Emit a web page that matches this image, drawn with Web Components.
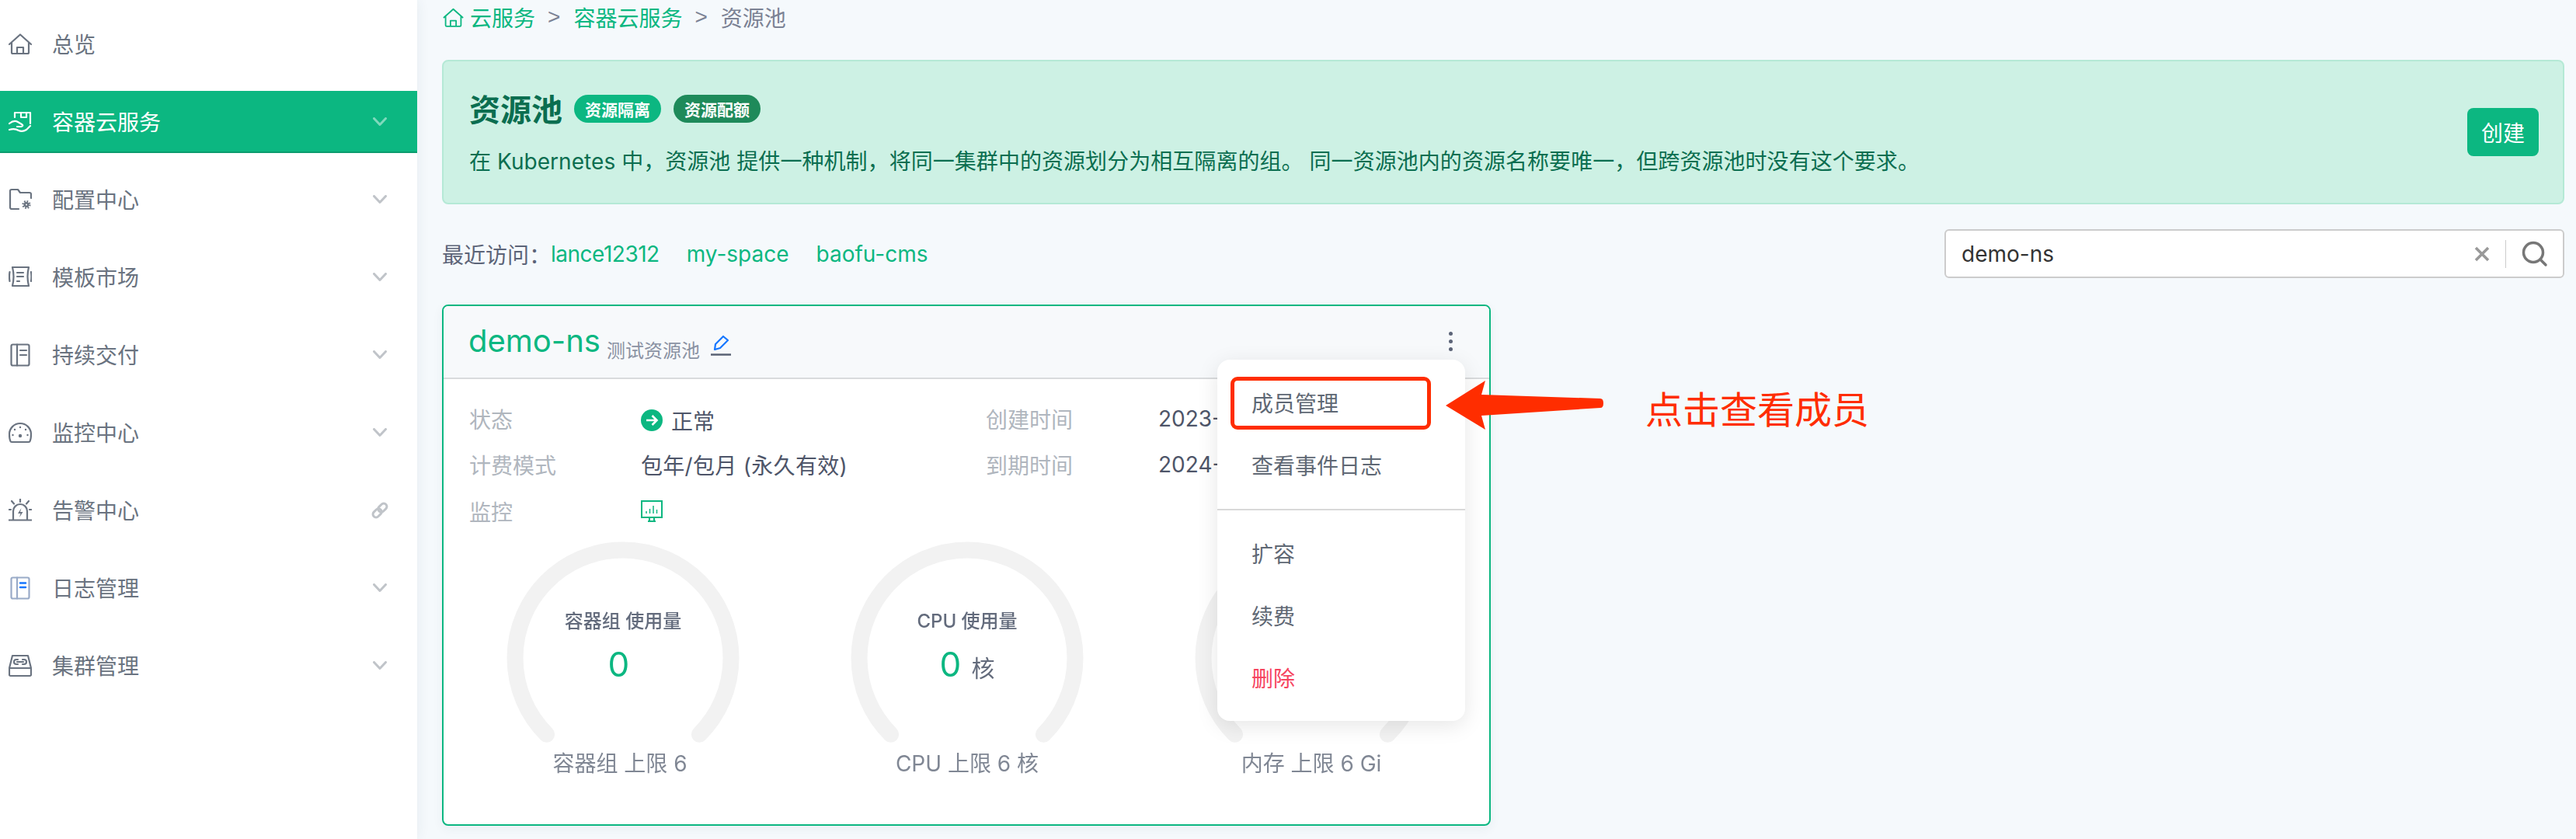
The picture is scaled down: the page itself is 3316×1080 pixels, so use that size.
<!DOCTYPE html>
<html lang="zh-CN">
<head>
<meta charset="utf-8">
<title>资源池</title>
<style>
  html, body { margin: 0; height: 100%; }
  body {
    position: relative;
    overflow: hidden;
    background: #f5f9fc;
    font-family: Inter, "Noto Sans CJK SC", sans-serif;
    font-size: 28px;
  }
  #app { display: flex; height: 1080px; }
</style>
</head>
<body>
<div id="app">
  <side-nav>
    <nav-item icon="home" label="总览" arrow="none"></nav-item>
    <nav-item icon="hand" label="容器云服务" active></nav-item>
    <nav-item icon="folder" label="配置中心"></nav-item>
    <nav-item icon="scroll" label="模板市场"></nav-item>
    <nav-item icon="book" label="持续交付"></nav-item>
    <nav-item icon="dial" label="监控中心"></nav-item>
    <nav-item icon="alarm" label="告警中心" arrow="link"></nav-item>
    <nav-item icon="log" label="日志管理"></nav-item>
    <nav-item icon="drive" label="集群管理"></nav-item>
  </side-nav>
  <pool-page>
    <bread-crumb></bread-crumb>
    <info-banner></info-banner>
    <recent-bar></recent-bar>
    <pool-card></pool-card>
  </pool-page>
</div>
<member-callout></member-callout>

<script>
const ICONS = {
  home: `<path d="M1 15 15 2.500 29 15M4 13v12.500A1.500 1.500 0 0 0 5.500 27h19a1.500 1.500 0 0 0 1.500-1.500V13M11 27v-8h8v8"/>`,
  hand: `<path d="M8 9V3h20v14M16 3v6h7V3M1 17q6-5 11-2l5 3q3 2-1 3h-5M1 25q7-2 12 1 5 2 10-1l5-5"/>`,
  folder: `<path d="M13 27H4a2 2 0 0 1-2-2V4a2 2 0 0 1 2-2h8l3 4h12a2 2 0 0 1 2 2v5"/>
    <circle cx="23" cy="21.500" r="3.400" fill="currentColor" stroke="none"/>
    <circle cx="23" cy="21.500" r="4.400" stroke-width="2.400" stroke-linecap="butt" stroke-dasharray="1.700 1.750"/>
    <circle cx="23" cy="21.500" r="1" fill="#fff" stroke="none"/>`,
  scroll: `<path d="M5 2h21q-3 12 0 24H5q3-12 0-24ZM11 9h8M11 14h8M11 20h3M1.500 8q-1 6 0 12M29 8q1 6 0 12"/>`,
  book: `<rect x="3.500" y="1.500" width="23" height="27" rx="2"/><path d="M11 1.500v27M15 9h8M15 15h8"/>`,
  dial: `<path d="M4.500 27a2.500 2.500 0 0 1-2.200-1.300Q1 22.500 1 17a14 14 0 0 1 28 0q0 5.500-1.300 8.700a2.500 2.500 0 0 1-2.200 1.300Z"/>
    <g fill="currentColor" stroke="none"><circle cx="15" cy="19" r="2.200"/><circle cx="15" cy="8" r="1.200"/><circle cx="8" cy="11" r="1.200"/><circle cx="22" cy="11" r="1.200"/><circle cx="5.500" cy="18" r="1.200"/><circle cx="24.500" cy="18" r="1.200"/></g>`,
  alarm: `<path d="M6 27V16a9 9 0 0 1 18 0v11M.5 27.500h29M15 .5V4M4 3l3 3.500M26 3l-3 3.500M.8 14H3M27 14h2.200"/>
    <path d="M16.500 12 12 19h3.500l-1.500 5 4.500-7H15Z" fill="currentColor" stroke="none"/>`,
  log: `<rect x="3.500" y="1.500" width="23" height="27" rx="2" stroke="#9aabc8"/><path d="M11 1.500v27" stroke="#9aabc8"/><path d="M15 8.500h7M15 14h7" stroke="#1677ff" stroke-width="2.500"/>`,
  drive: `<path d="M1 18 5 2h20l4 16v8.500a1.500 1.500 0 0 1-1.500 1.500h-25A1.500 1.500 0 0 1 1 26.500ZM1 18h28M12 7h-2a3 3 0 0 0 0 6h2M18 7h2a3 3 0 0 1 0 6h-2M11 10h8"/>`
};

class SideNav extends HTMLElement {
  constructor() {
    super();
    this.attachShadow({ mode: "open" }).innerHTML = `
    <style>
      :host {
        display: flex;
        flex-direction: column;
        gap: 20px;
        flex: 0 0 537px;
        box-sizing: border-box;
        padding-top: 17px;
        background: #fff;
        box-shadow: 0 0 16px rgba(40, 70, 90, .08);
        z-index: 1;
      }
    </style>
    <slot></slot>`;
  }
}

class NavItem extends HTMLElement {
  connectedCallback() {
    const arrow = this.getAttribute("arrow");
    let tail = `<svg class="tail" width="18" height="12" viewBox="0 0 18 12"><path d="M1.500 1.500 9 9.500l7.500-8"/></svg>`;
    if (arrow === "none") tail = "";
    if (arrow === "link") {
      tail = `<svg class="tail link" width="22" height="24" viewBox="0 0 22 22"><g transform="rotate(-45 11 11)"><rect x="0" y="7" width="12.500" height="8" rx="4"/><rect x="9.500" y="7" width="12.500" height="8" rx="4"/></g></svg>`;
    }
    this.attachShadow({ mode: "open" }).innerHTML = `
    <style>
      :host {
        display: flex;
        align-items: center;
        box-sizing: border-box;
        height: 80px;
        padding: 0 39px 0 11px;
        color: #6a7380;
        font-size: 28px;
      }
      :host([active]) {
        background: #0cb781;
        border-bottom: 2px solid #0a9c6e;
        padding-top: 2px;
        color: #fff;
      }
      .icon { width: 30px; height: 30px; flex: none; fill: none; stroke: currentColor; stroke-width: 2.200; stroke-linecap: round; stroke-linejoin: round; }
      .label { margin-left: 26px; flex: 1; padding-top: 2px; line-height: 40px; }
      .tail { fill: none; stroke: #c0c4c9; stroke-width: 3; stroke-linecap: round; stroke-linejoin: round; }
      .link { margin-right: -2px; }
      :host([active]) .tail { stroke: #7fd9bc; }
    </style>
    <svg class="icon" viewBox="0 0 30 30">${ICONS[this.getAttribute("icon")]}</svg>
    <span class="label">${this.getAttribute("label")}</span>
    ${tail}`;
  }
}

class PoolPage extends HTMLElement {
  constructor() {
    super();
    this.attachShadow({ mode: "open" }).innerHTML = `
    <style>
      :host {
        display: flex;
        flex-direction: column;
        flex: 1;
        min-width: 0;
        padding: 0 15px 0 32px;
      }
    </style>
    <slot></slot>`;
  }
}

class BreadCrumb extends HTMLElement {
  constructor() {
    super();
    this.attachShadow({ mode: "open" }).innerHTML = `
    <style>
      :host {
        display: flex;
        align-items: center;
        height: 43px;
        padding-left: 1px;
        font-size: 28px;
        color: #0cb781;
      }
      svg { width: 27px; height: 28px; fill: none; stroke: currentColor; stroke-width: 2; stroke-linejoin: round; margin: 3px 8px 0 0; }
      .sep { color: #7b8294; font-size: 28px; font-family: "Liberation Sans", sans-serif; margin: 0 17px 0 16px; }
      .cur { color: #7b8294; }
    </style>
    <svg viewBox="0 0 30 30">${ICONS.home}</svg>
    <span>云服务</span><span class="sep">&gt;</span>
    <span>容器云服务</span><span class="sep">&gt;</span>
    <span class="cur">资源池</span>`;
  }
}

class InfoBanner extends HTMLElement {
  constructor() {
    super();
    this.attachShadow({ mode: "open" }).innerHTML = `
    <style>
      :host {
        display: flex;
        align-items: center;
        justify-content: space-between;
        box-sizing: border-box;
        height: 186px;
        margin-top: 34px;
        padding: 0 31px 0 33px;
        background: #cdf1e4;
        border: 2px solid #b5e9d6;
        border-radius: 8px;
        color: #0b6e50;
      }
      .head { display: flex; align-items: center; height: 60px; }
      h1 { margin: 0 -1px 0 0; padding-top: 4px; font-size: 40px; font-weight: 700; line-height: 56px; }
      .tag {
        display: inline-flex;
        align-items: center;
        height: 36px;
        padding: 0 14px;
        margin-left: 16px;
        border-radius: 18px;
        background: #0cb781;
        color: #fff;
        font-size: 21px;
        font-weight: 700;
      }
      .tag.dark { background: #1e8a5a; }
      p { margin: 16px 0 0; font-size: 28px; line-height: 44px; letter-spacing: .05px; }
      button {
        width: 92px;
        height: 62px;
        padding: 0;
        border: 0;
        border-radius: 8px;
        background: #0cb781;
        color: #fff;
        font: inherit;
        font-size: 28px;
      }
    </style>
    <div>
      <div class="head"><h1>资源池</h1><span class="tag">资源隔离</span><span class="tag dark">资源配额</span></div>
      <p>在 Kubernetes 中，资源池 提供一种机制，将同一集群中的资源划分为相互隔离的组。 同一资源池内的资源名称要唯一，但跨资源池时没有这个要求。</p>
    </div>
    <button>创建</button>`;
  }
}

class RecentBar extends HTMLElement {
  constructor() {
    super();
    this.attachShadow({ mode: "open" }).innerHTML = `
    <style>
      :host {
        display: flex;
        align-items: center;
        height: 63px;
        margin-top: 32px;
        font-size: 28px;
        color: #5c6478;
      }
      a { color: #0cb781; text-decoration: none; margin-right: 35px; }
      a:first-of-type { letter-spacing: -.5px; }
      .search {
        display: flex;
        align-items: center;
        box-sizing: border-box;
        width: 798px;
        height: 63px;
        margin-left: auto;
        padding-left: 20px;
        background: #fff;
        border: 2px solid #ccc;
        border-radius: 6px;
        color: #333;
      }
      .val { flex: 1; }
      .x { width: 20px; height: 20px; fill: none; stroke: #999; stroke-width: 3.500; }
      .div { width: 1px; height: 36px; margin: 0 20px; background: #ccc; }
      .mag { width: 34px; height: 34px; margin-right: 19px; fill: none; stroke: #777; stroke-width: 3.500; stroke-linecap: round; }
    </style>
    <span>最近访问：</span><a>lance12312</a><a>my-space</a><a>baofu-cms</a>
    <div class="search">
      <span class="val">demo-ns</span>
      <svg class="x" viewBox="0 0 20 20"><path d="M2 2l16 16M18 2 2 18"/></svg>
      <span class="div"></span>
      <svg class="mag" viewBox="0 0 34 34"><circle cx="15" cy="15" r="12.500"/><path d="M24 24l7 7"/></svg>
    </div>`;
  }
}

class GaugeRing extends HTMLElement {
  connectedCallback() {
    const unit = this.getAttribute("unit");
    const title = this.getAttribute("title-text");
    const inner = title ? `
      <div class="mid">
        <div class="t">${title}</div>
        <div class="v"><b>${this.getAttribute("value")}</b>${unit ? `<span>${unit}</span>` : `<i></i>`}</div>
      </div>` : "";
    this.attachShadow({ mode: "open" }).innerHTML = `
    <style>
      :host {
        display: block;
        position: relative;
        width: 300px;
      }
      :host([shift]) .foot { padding-right: 8px; }
      svg { display: block; width: 300px; height: 262px; }
      .mid { position: absolute; left: 0; right: 0; top: 84px; text-align: center; filter: blur(.4px); }
      .t { font-size: 24px; line-height: 38px; color: #636b7c; font-weight: 500; }
      .v { display: flex; justify-content: center; align-items: center; gap: 13px; height: 60px; margin-top: 6px; color: #636b7c; font-size: 30px; }
      .v b { font-size: 44px; font-weight: 400; color: #0cb781; }
      .v span { padding-top: 6px; }
      .v i { width: 0; margin-left: -2px; }
      .foot { margin-top: 2px; line-height: 44px; text-align: center; font-size: 28px; color: #808794; filter: blur(.4px); white-space: nowrap; }
    </style>
    <svg viewBox="0 0 300 262"><path d="M51.700 248.300a139 139 0 1 1 196.600 0" fill="none" stroke="#f2f2f2" stroke-width="21" stroke-linecap="round"/></svg>
    ${inner}
    <div class="foot">${this.getAttribute("limit")}</div>`;
  }
}

class ActionMenu extends HTMLElement {
  constructor() {
    super();
    this.attachShadow({ mode: "open" }).innerHTML = `
    <style>
      :host {
        display: block;
        position: absolute;
        left: 996px;
        top: 69px;
        width: 319px;
        box-sizing: border-box;
        padding: 16px 0 15px;
        background: #fff;
        border-radius: 16px;
        box-shadow: 0 6px 28px rgba(0, 0, 0, .1);
        font-size: 28px;
        color: #5f6874;
      }
      div { height: 80px; line-height: 83px; padding-left: 44px; }
      hr { height: 2px; margin: 16px 0; border: 0; background: #d9d9d9; }
      .del { color: #f6455f; }
    </style>
    <div>成员管理</div>
    <div>查看事件日志</div>
    <hr>
    <div>扩容</div>
    <div>续费</div>
    <div class="del">删除</div>`;
  }
}

class PoolCard extends HTMLElement {
  constructor() {
    super();
    this.attachShadow({ mode: "open" }).innerHTML = `
    <style>
      :host {
        display: block;
        position: relative;
        box-sizing: border-box;
        width: 1350px;
        height: 671px;
        margin-top: 34px;
        background: #fff;
        border: 2px solid #0cb781;
        border-radius: 8px;
        box-shadow: 0 4px 14px rgba(40, 70, 90, .06);
      }
      header {
        display: flex;
        align-items: center;
        box-sizing: border-box;
        height: 94px;
        padding: 0 47px 0 32px;
        background: #f7f9fb;
        border-bottom: 2px solid #d9dbdd;
        border-radius: 6px 6px 0 0;
      }
      .name { font-size: 40px; color: #0cb781; margin-top: -3px; }
      .note { margin: 18px 0 0 8px; font-size: 24px; color: #8a92a3; }
      .edit { width: 26px; height: 27px; margin: 8px 0 0 14px; fill: none; stroke-width: 2.200; }
      .more { margin-left: auto; display: flex; flex-direction: column; gap: 5px; margin-top: -2px; }
      .more i { width: 5px; height: 5px; border-radius: 50%; background: #5c6478; }
      dl {
        display: grid;
        grid-template-columns: 221px 444px 222px 1fr;
        grid-auto-rows: 59.500px;
        align-items: center;
        margin: 21px 0 0;
        padding-left: 33px;
        font-size: 28px;
      }
      dt { color: #b0b6be; }
      dd { margin: 0; color: #4e5569; display: flex; align-items: center; }
      .plan { letter-spacing: .3px; }
      .ok { width: 28px; height: 28px; margin-right: 11px; margin-top: 5px; }
      .ok + span { margin-top: 4px; }
      .chart { width: 28px; height: 28px; fill: none; stroke: #0cb781; stroke-width: 2; }
      .rings { display: flex; gap: 143px; margin: 9px 0 0 81px; }
    </style>
    <header>
      <span class="name">demo-ns</span>
      <span class="note">测试资源池</span>
      <svg class="edit" viewBox="0 0 26 27">
        <path d="M5 19l1-7L16 2l6 5-10 10Z" stroke="#1677ff" stroke-linejoin="round"/>
        <path d="M0 25.500h26" stroke="#5a6274" stroke-width="2.500"/>
      </svg>
      <span class="more"><i></i><i></i><i></i></span>
    </header>
    <dl>
      <dt>状态</dt>
      <dd><svg class="ok" viewBox="0 0 28 28"><circle cx="14" cy="14" r="14" fill="#0cb781"/><path d="M7 14h13M14.500 8l6 6-6 6" fill="none" stroke="#fff" stroke-width="2.600"/></svg><span>正常</span></dd>
      <dt>创建时间</dt><dd>2023-</dd>
      <dt>计费模式</dt><dd class="plan">包年/包月 (永久有效)</dd>
      <dt>到期时间</dt><dd>2024-</dd>
      <dt>监控</dt>
      <dd><svg class="chart" viewBox="0 0 28 28"><path d="M1 1h26v21H1ZM9 27h10M11 22v5M17 22v5"/><path d="M7 17v-3M11.500 17v-6M16 17V7M20.500 17v-5" stroke-width="1.500"/></svg></dd>
    </dl>
    <div class="rings">
      <gauge-ring shift title-text="容器组 使用量" value="0" limit="容器组 上限 6"></gauge-ring>
      <gauge-ring title-text="CPU 使用量" value="0" unit="核" limit="CPU 上限 6 核"></gauge-ring>
      <gauge-ring limit="内存 上限 6 Gi"></gauge-ring>
    </div>
    <action-menu></action-menu>`;
  }
}

class MemberCallout extends HTMLElement {
  constructor() {
    super();
    this.attachShadow({ mode: "open" }).innerHTML = `
    <style>
      :host { position: absolute; left: 0; top: 0; z-index: 5; }
      .box {
        position: absolute;
        left: 1584px;
        top: 485px;
        width: 258px;
        height: 68px;
        box-sizing: border-box;
        border: 5px solid #ff2d00;
        border-radius: 9px;
      }
      svg { position: absolute; left: 1861px; top: 490px; width: 205px; height: 64px; }
      span {
        position: absolute;
        left: 2118px;
        top: 498px;
        line-height: 60px;
        font-size: 48px;
        color: #ff2d00;
        white-space: nowrap;
      }
    </style>
    <div class="box"></div>
    <svg viewBox="0 0 205 64"><path d="M0 32 51 0 46 18l153 5q4 0 4 6t-4 6L46 45l5 18Z" fill="#ff2d00"/></svg>
    <span>点击查看成员</span>`;
  }
}

customElements.define("side-nav", SideNav);
customElements.define("nav-item", NavItem);
customElements.define("pool-page", PoolPage);
customElements.define("bread-crumb", BreadCrumb);
customElements.define("info-banner", InfoBanner);
customElements.define("recent-bar", RecentBar);
customElements.define("gauge-ring", GaugeRing);
customElements.define("action-menu", ActionMenu);
customElements.define("pool-card", PoolCard);
customElements.define("member-callout", MemberCallout);
</script>
</body>
</html>
